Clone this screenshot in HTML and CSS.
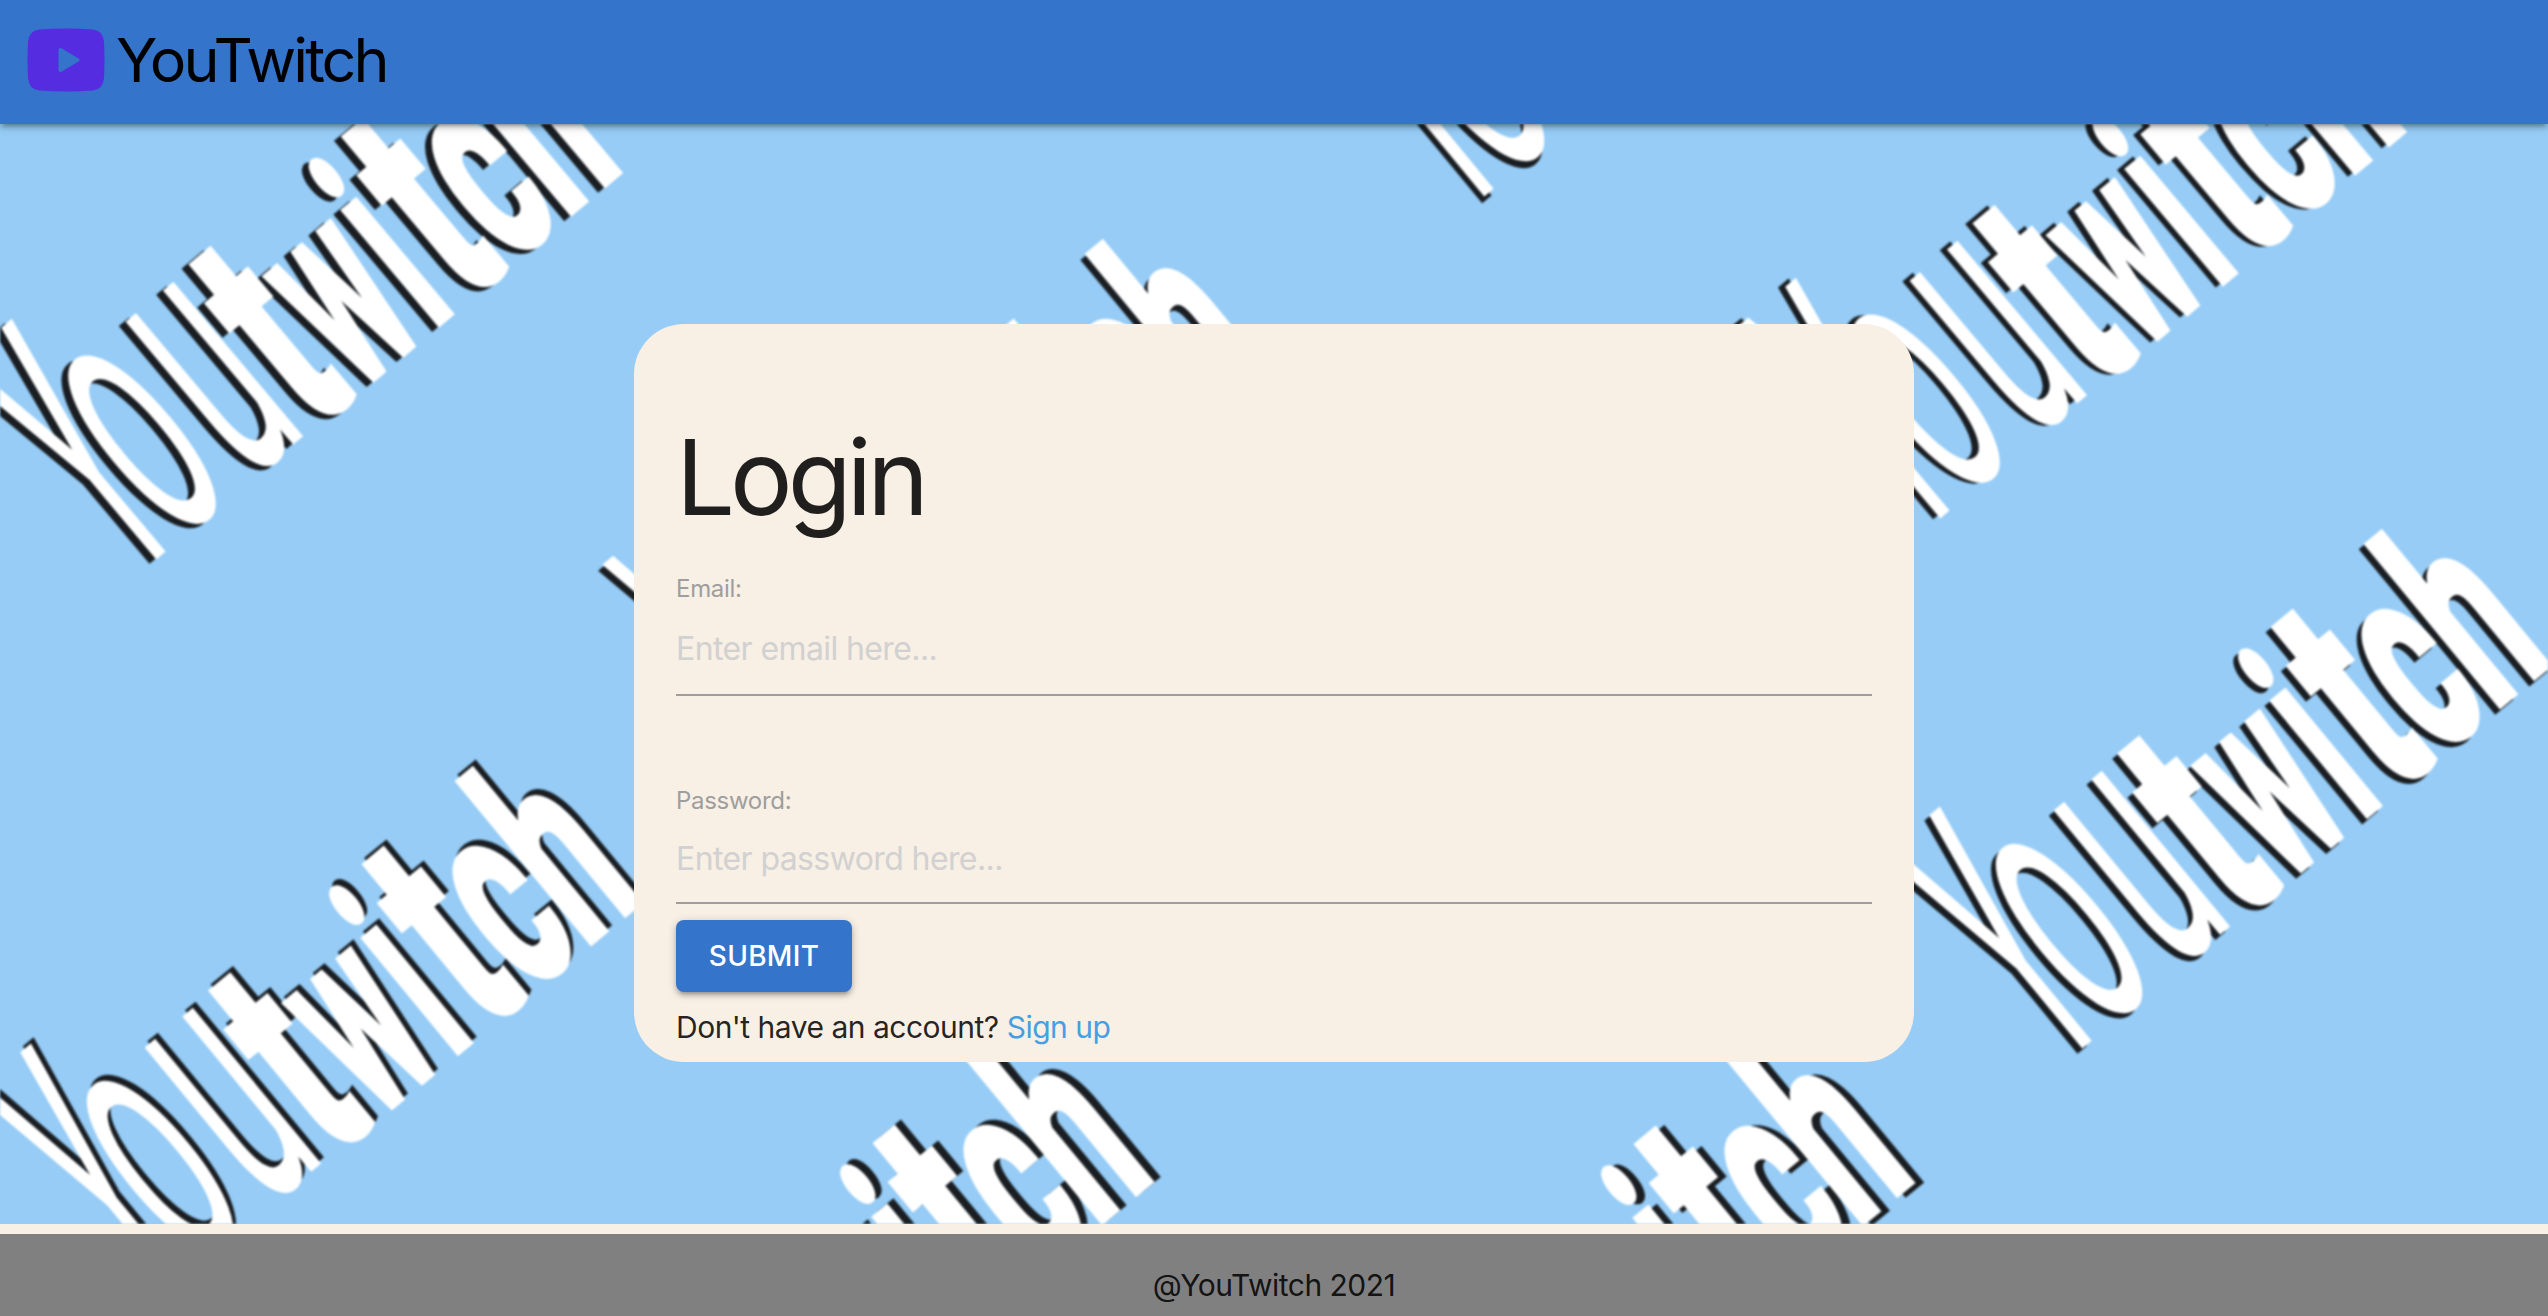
FILE: index.html
```html
<!DOCTYPE html>
<html lang="en">
<head>
<meta charset="utf-8">
<title>YouTwitch</title>
<link rel="stylesheet" href="styles.css">
</head>
<body>
<header class="navbar">
  <a class="brand" href="#">
    <svg class="brand-icon" viewBox="0 0 78 64" aria-hidden="true">
      <path fill-rule="evenodd" d="M12 1.500Q39 -.3 66 1.500Q76 2.500 77 14Q78 32 77 50Q76 61.500 66 62.500Q39 64.300 12 62.500Q2 61.500 1 50Q0 32 1 14Q2 2.500 12 1.500ZM31.500 22V42Q32 45 35 43.500L51.500 33.500Q54 32 51.500 30.500L35 20.500Q32 19 31.500 22Z"/>
    </svg>
    <span class="brand-name">YouTwitch</span>
  </a>
</header>
<main class="main">
  <svg class="pattern" viewBox="0 124 2548 1100" aria-hidden="true">
    <defs>
      <g id="word">
        <text class="light" transform="scale(1.300 3.900)" x="-27">Y</text>
        <text class="light" transform="scale(1.500 3.820)" x="14 78">ou</text>
        <text class="bold" transform="scale(1.700 3.050)" x="118">t</text>
        <text class="bold" transform="scale(1.220 2.750)" x="214 293">wi</text>
        <text class="bold" transform="scale(1.700 3.050)" x="235">t</text>
        <text class="bold" transform="scale(1.400 2.750)" x="327 379">ch</text>
      </g>
    </defs>
    <g transform="translate(158 558) rotate(-40)"><use class="shade" href="#word" x="-8" y="-1"/><use class="face" href="#word"/></g>
    <g transform="translate(175 1284) rotate(-39.500)"><use class="shade" href="#word" x="6" y="-3"/><use class="face" href="#word"/></g>
    <g transform="translate(2084 1047) rotate(-39.500)"><use class="shade" href="#word" x="-7" y="1"/><use class="face" href="#word"/></g>
    <g transform="translate(1942 517) rotate(-40)"><use class="shade" href="#word" x="-6" y="-4"/><use class="face" href="#word"/></g>
    <g transform="translate(805 757) rotate(-39.500)"><use class="shade" href="#word" x="-7" y="2"/><use class="face" href="#word"/></g>
    <g transform="translate(1486 195) rotate(-39.500)"><use class="shade" href="#word" x="-6" y="4"/><use class="face" href="#word"/></g>
    <g transform="translate(686 1563) rotate(-39.500)"><use class="shade" href="#word" x="8"/><use class="face" href="#word"/></g>
    <g transform="translate(1447 1564) rotate(-39.500)"><use class="shade" href="#word" x="7" y="5"/><use class="face" href="#word"/></g>
  </svg>
  <form class="card">
    <h1 class="title">Login</h1>
    <div class="field email">
      <label for="email">Email:</label>
      <input id="email" type="email" placeholder="Enter email here...">
    </div>
    <div class="field password">
      <label for="password">Password:</label>
      <input id="password" type="password" placeholder="Enter password here...">
    </div>
    <button class="submit" type="button">Submit</button>
    <p class="signup">Don't have an account? <a href="#">Sign up</a></p>
  </form>
</main>
<footer class="footer">@YouTwitch 2021</footer>
</body>
</html>
```
FILE: styles.css
```css
* { box-sizing: border-box; }
body {
  margin: 0;
  height: 1316px;
  display: flex;
  flex-direction: column;
  overflow: hidden;
  background: #f8efe5;
  color: rgba(0, 0, 0, .87);
  font: 30px/45px Inter, "Liberation Sans", sans-serif;
  letter-spacing: -.5px;
}
.navbar {
  position: relative;
  z-index: 1;
  flex: none;
  height: 124px;
  padding: 0 27px;
  background: #3475cb;
  box-shadow: 0 4px 4px rgba(0, 0, 0, .14), 0 6px 2px -4px rgba(0, 0, 0, .12), 0 2px 10px rgba(0, 0, 0, .2);
}
.brand { height: 120px; display: flex; align-items: center; gap: 11px; color: #000; text-decoration: none; }
.brand-icon { width: 78px; height: 64px; fill: #552ce0; }
.brand-name { font-size: 61px; line-height: 120px; letter-spacing: -2.900px; }
.main {
  position: relative;
  flex: none;
  height: 1100px;
  padding-top: 200px;
  background: #96ccf6;
  overflow: hidden;
}
.pattern { position: absolute; inset: 0; width: 2548px; height: 1100px; filter: blur(.9px); letter-spacing: 0; }
.pattern text { font-family: Roboto, sans-serif; font-size: 100px; stroke-linejoin: miter; }
.light { font-weight: 400; }
.bold { font-weight: 700; stroke-width: 3px; }
.shade { fill: #1a1e22; stroke: #1a1e22; stroke-width: 0; }
.face { fill: #fff; stroke: #fff; stroke-width: 0; }
.card {
  position: relative;
  width: 1280px;
  height: 738px;
  margin: 0 auto;
  padding: 90px 42px 0;
  border-radius: 50px;
  background: #f8efe5;
}
.title { margin: 0; font-size: 104.500px; line-height: 126px; font-weight: 400; letter-spacing: -5px; }
.field { display: flex; flex-direction: column; }
.field label { font-size: 24px; line-height: 38px; height: 36px; color: #9e9e9e; letter-spacing: -.3px; }
.field input {
  width: 100%;
  height: 90px;
  padding: 0 0 3px;
  border: 0;
  border-bottom: 2px solid #9e9e9e;
  background: none;
  font: 32px Inter, "Liberation Sans", sans-serif;
  letter-spacing: -.6px;
}
.field input::placeholder { color: #d1d1d1; opacity: 1; }
.email { padding-top: 30px; }
.password { padding-top: 86px; }
.password input { height: 86px; }
.submit {
  display: block;
  width: 176px;
  height: 72px;
  margin: 16px 0 13px;
  padding: 0;
  border: 0;
  border-radius: 8px;
  background: #3475cb;
  color: #fff;
  font: 500 28px/72px Inter, "Liberation Sans", sans-serif;
  letter-spacing: .3px;
  text-transform: uppercase;
  box-shadow: 0 4px 4px rgba(0, 0, 0, .14), 0 6px 2px -4px rgba(0, 0, 0, .12), 0 2px 10px rgba(0, 0, 0, .2);
}
.signup { margin: 0; }
.signup a { color: #459fe1; text-decoration: none; }
.footer {
  flex: none;
  height: 82px;
  margin-top: 10px;
  padding-top: 29px;
  background: #808080;
  text-align: center;
}
```
